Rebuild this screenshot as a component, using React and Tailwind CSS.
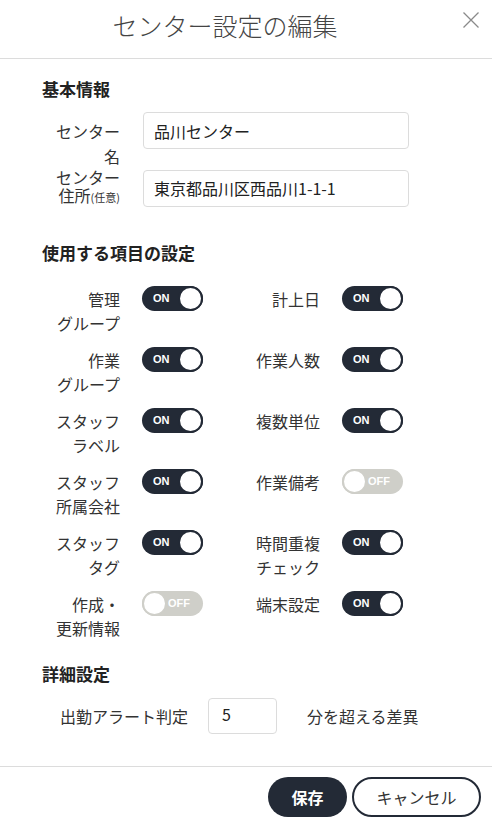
import React from "react";

const FONT = { fontFamily: '"Noto Sans CJK JP", "Noto Sans", sans-serif' };

function Toggle({ on }) {
  if (on) {
    return (
      <div className="relative flex h-[25px] w-[61px] shrink-0 items-center rounded-full bg-[#232a36]">
        <span
          className="ml-[11px] text-[11px] font-bold leading-none text-white"
          style={{ fontFamily: '"Liberation Sans", Arial, sans-serif' }}
        >
          ON
        </span>
        <span className="absolute right-0 top-0 h-[25px] w-[25px] rounded-full border-2 border-[#232a36] bg-white" />
      </div>
    );
  }
  return (
    <div className="relative flex h-[25px] w-[61px] shrink-0 items-center justify-end rounded-full bg-[#cfcfc9]">
      <span
        className="mr-[13px] text-[11px] font-bold leading-none text-white"
        style={{ fontFamily: '"Liberation Sans", Arial, sans-serif' }}
      >
        OFF
      </span>
      <span className="absolute left-0 top-0 h-[25px] w-[25px] rounded-full border-2 border-[#cfcfc9] bg-white" />
    </div>
  );
}

function ToggleItem({ lines, on }) {
  return (
    <div className="flex items-start">
      <div className="w-[78px] shrink-0 pt-[1px] text-right text-[16px] leading-[24px] text-[#333]">
        {lines.map((l, i) => (
          <div key={i}>{l}</div>
        ))}
      </div>
      <div className="ml-[22px]">
        <Toggle on={on} />
      </div>
    </div>
  );
}

const items = [
  [["管理", "グループ"], true],
  [["計上日"], true],
  [["作業", "グループ"], true],
  [["作業人数"], true],
  [["スタッフ", "ラベル"], true],
  [["複数単位"], true],
  [["スタッフ", "所属会社"], true],
  [["作業備考"], false],
  [["スタッフ", "タグ"], true],
  [["時間重複", "チェック"], true],
  [["作成・", "更新情報"], false],
  [["端末設定"], true],
];

export default function App() {
  return (
    <div className="flex h-[824px] w-[492px] flex-col bg-white text-[#333]" style={FONT}>
      {/* header */}
      <div className="relative flex h-[59px] shrink-0 justify-center border-b border-[#dcdcdc] pr-[42px] pt-[7px]">
        <h1 className="text-[25px] font-light leading-[36px] text-[#444]">センター設定の編集</h1>
        <button className="absolute right-[12px] top-[11px] p-0 text-[#8a8a8a]" aria-label="close">
          <svg width="18" height="18" viewBox="0 0 18 18" fill="none" stroke="currentColor" strokeWidth="1.3">
            <path d="M1.5 1.5 L16.5 16.5 M16.5 1.5 L1.5 16.5" />
          </svg>
        </button>
      </div>

      {/* body */}
      <div className="flex-1 pl-[42px]">
        <h2 className="mt-[18px] text-[17px] font-bold leading-[24px] text-[#222]">基本情報</h2>

        <div className="mt-[11px] flex items-start">
          <div className="w-[78px] shrink-0 pt-[7px] text-right text-[16px] leading-[25px]">
            <div>センター</div>
            <div>名</div>
          </div>
          <div className="ml-[23px] flex h-[37px] w-[266px] items-center rounded-[4px] border border-[#dcdcdc] pl-[10px] text-[16px] text-[#222]">
            品川センター
          </div>
        </div>

        <div className="flex items-center">
          <div className="w-[78px] shrink-0 text-right text-[16px]">
            <div className="leading-[17px]">センター</div>
            <div className="leading-[19px]">
              住所<span className="text-[11px]">(任意)</span>
            </div>
          </div>
          <div className="ml-[23px] flex h-[37px] w-[266px] items-center rounded-[4px] border border-[#dcdcdc] pl-[10px] text-[16px] text-[#222]">
            東京都品川区西品川1-1-1
          </div>
        </div>

        <h2 className="mt-[34px] text-[17px] font-bold leading-[24px] text-[#222]">使用する項目の設定</h2>

        <div className="mt-[21px] grid grid-cols-[200px_200px] gap-y-[12px]">
          {items.map(([lines, on], i) => (
            <ToggleItem key={i} lines={lines} on={on} />
          ))}
        </div>

        <h2 className="mt-[22px] text-[17px] font-bold leading-[24px] text-[#222]">詳細設定</h2>

        <div className="mt-[12px] flex items-center pl-[18px] text-[16px]">
          <span>出勤アラート判定</span>
          <div className="ml-[20px] flex h-[36px] w-[69px] items-center rounded-[4px] border border-[#dcdcdc] pl-[13px] pb-[4px] text-[#222]">
            5
          </div>
          <span className="ml-[30px]">分を超える差異</span>
        </div>
      </div>

      {/* footer */}
      <div className="flex h-[58px] shrink-0 items-start justify-end gap-[5px] border-t border-[#dcdcdc] pr-[11px] pt-[10px]">
        <button className="flex h-[40px] w-[79px] items-center justify-center rounded-full bg-[#232a36] text-[16px] font-bold text-white">
          保存
        </button>
        <button className="flex h-[40px] w-[129px] items-center justify-center rounded-full border-2 border-[#232a36] bg-white text-[16px] text-[#333]">
          キャンセル
        </button>
      </div>
    </div>
  );
}
